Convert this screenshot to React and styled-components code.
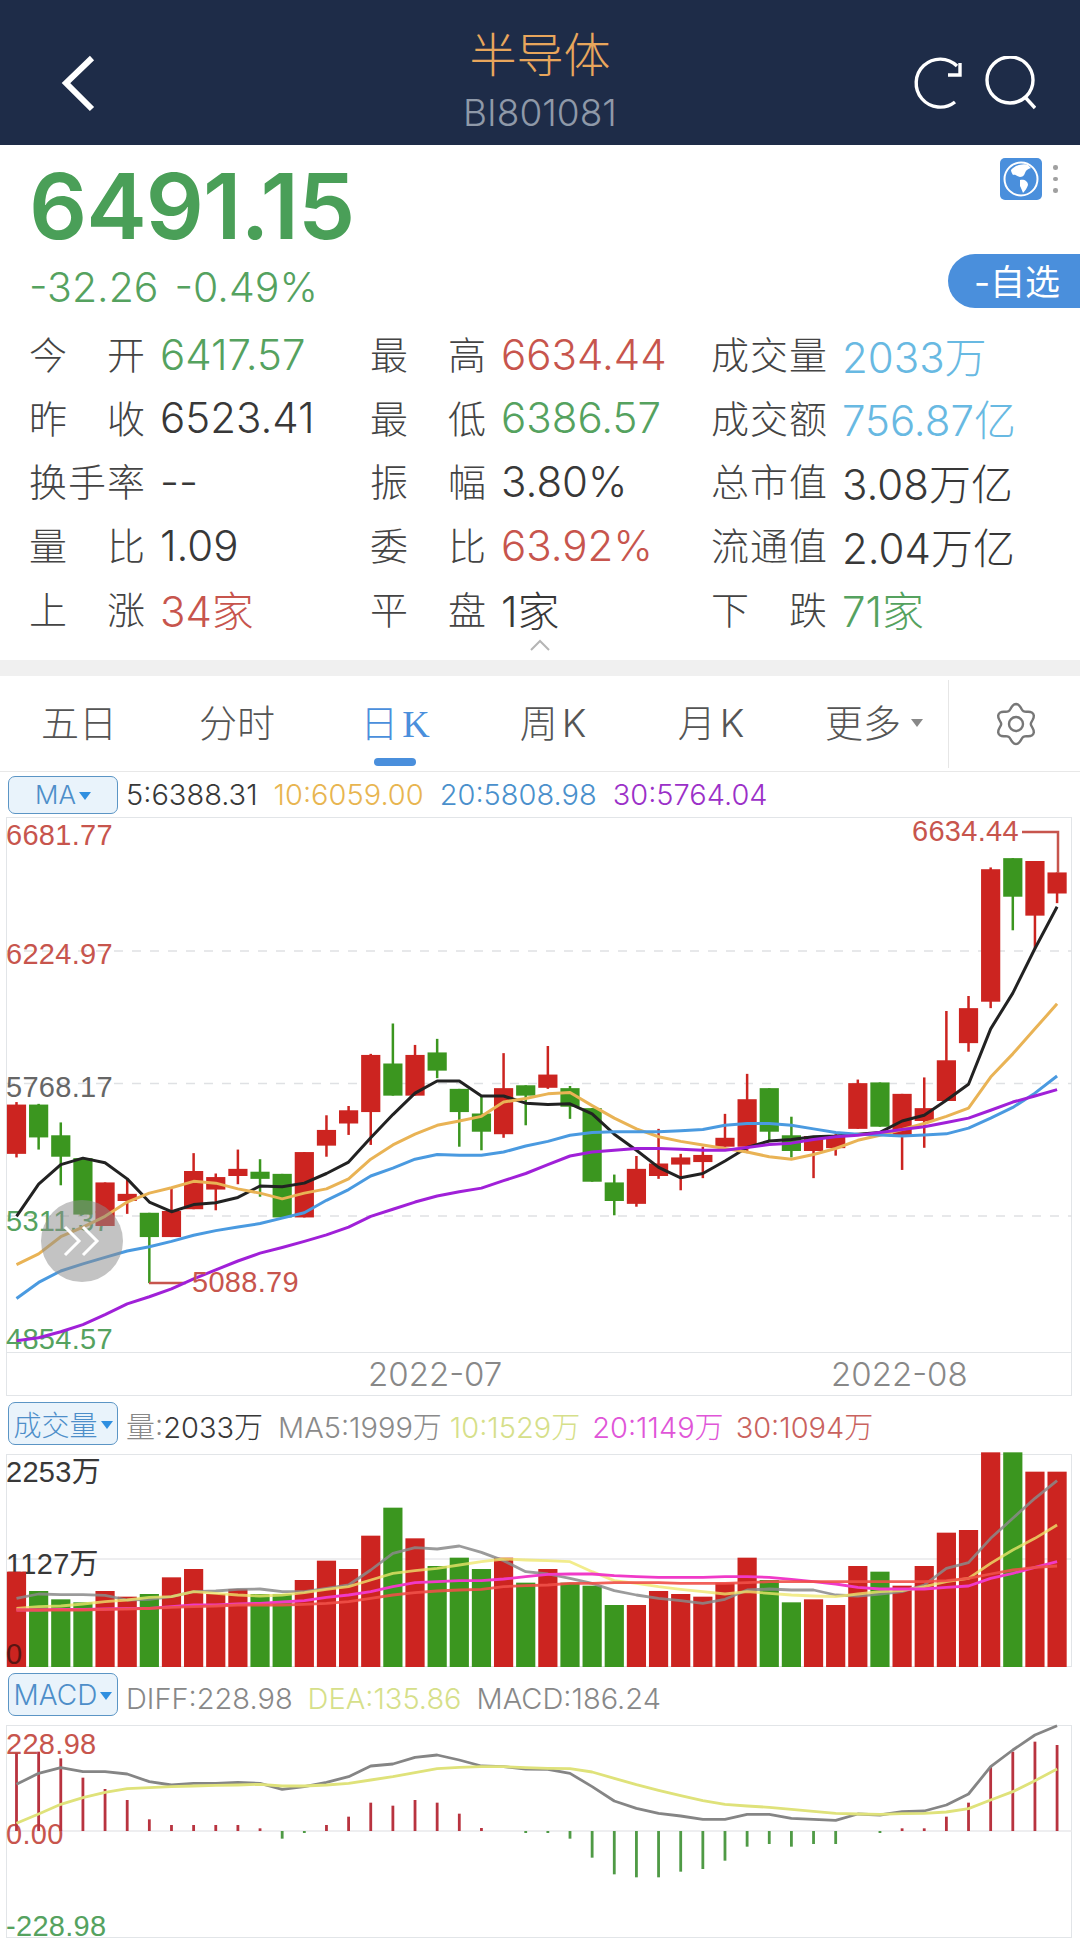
import React from "react";
import styled, { css, createGlobalStyle } from "styled-components";

const SANS = `Inter, "Noto Sans CJK SC", sans-serif`;
const colors = {
  navy: "#1e2c48",
  green: "#55a25f",
  red: "#c7554d",
  sky: "#68b9e2",
  ink: "#383838",
  blue: "#4a8fdc",
  frame: "#e2e5e8",
  candleRed: "#cc2420",
  candleGreen: "#3b961f",
};

// chart data is read off the reference: y values are in crop units, see the toY helpers
const slotX = (i) => 16.5 + 22.14 * i;
const priceY = (v) => 810 + v / 2.8;
const volumeY = (v) => 1390 + v / 3;
const macdY = (v) => 1670 + v / 3;

const candles = [
  ["r", 822, 960, 815, 970], ["g", 822, 914, 820, 948], ["g", 908, 968, 872, 1048], ["g", 972, 1130, 972, 1130],
  ["r", 1040, 1162, 1040, 1162], ["r", 1072, 1092, 1028, 1128], ["g", 1125, 1193, 1125, 1322], ["r", 1120, 1193, 1058, 1193],
  ["r", 1008, 1115, 958, 1115], ["r", 1025, 1060, 1015, 1118], ["r", 1002, 1022, 948, 1045], ["g", 1010, 1030, 975, 1080],
  ["g", 1016, 1138, 1016, 1138], ["r", 955, 1138, 955, 1138], ["r", 893, 937, 852, 968], ["r", 838, 875, 826, 907],
  ["r", 683, 843, 680, 935], ["g", 707, 797, 595, 797], ["r", 683, 797, 655, 797], ["g", 676, 727, 638, 748],
  ["g", 778, 843, 778, 940], ["g", 847, 898, 800, 950], ["r", 776, 905, 678, 915], ["g", 768, 797, 768, 880],
  ["r", 738, 775, 658, 778], ["g", 776, 828, 770, 862], ["g", 832, 1038, 832, 1038], ["g", 1040, 1092, 1018, 1132],
  ["r", 1002, 1100, 966, 1108], ["r", 987, 1022, 890, 1030], ["r", 970, 990, 960, 1062], ["r", 963, 983, 940, 1028],
  ["r", 915, 940, 848, 940], ["r", 807, 940, 736, 958], ["g", 776, 898, 776, 925], ["g", 908, 952, 856, 970],
  ["r", 910, 952, 910, 1028], ["r", 912, 944, 905, 965], ["r", 762, 890, 752, 890], ["g", 760, 884, 760, 884],
  ["r", 792, 912, 792, 1005], ["r", 832, 868, 746, 943], ["r", 698, 812, 560, 812], ["r", 552, 650, 518, 674],
  ["r", 163, 534, 158, 552], ["g", 132, 240, 132, 334], ["r", 140, 293, 140, 385], ["r", 172, 231, 172, 258],
];

const priceLines = [
  { color: "#222222", points: [1135, 1045, 990, 972, 985, 1030, 1095, 1122, 1102, 1097, 1082, 1050, 1052, 1042, 1015, 983, 915, 850, 790, 756, 756, 798, 798, 818, 822, 820, 848, 905, 950, 998, 1027, 1015, 980, 942, 924, 920, 912, 910, 905, 900, 868, 852, 810, 765, 610, 510, 385, 268] },
  { color: "#e9b355", points: [1270, 1240, 1192, 1165, 1135, 1095, 1070, 1055, 1037, 1042, 1058, 1070, 1086, 1070, 1058, 1030, 975, 935, 905, 880, 868, 855, 815, 805, 792, 788, 825, 860, 890, 912, 925, 935, 945, 955, 968, 975, 962, 945, 922, 908, 892, 875, 855, 832, 745, 680, 610, 540] },
  { color: "#4a9ae0", points: [1365, 1320, 1288, 1268, 1250, 1232, 1220, 1205, 1188, 1175, 1165, 1155, 1140, 1125, 1090, 1060, 1022, 1000, 975, 962, 964, 964, 955, 938, 925, 908, 900, 898, 898, 898, 895, 892, 880, 875, 875, 880, 890, 900, 905, 907, 910, 907, 904, 888, 860, 830, 790, 742] },
  { color: "#a020d8", points: [1483, 1475, 1458, 1438, 1410, 1380, 1360, 1338, 1310, 1285, 1260, 1238, 1222, 1205, 1187, 1165, 1135, 1115, 1095, 1078, 1066, 1056, 1035, 1015, 990, 966, 955, 950, 945, 945, 947, 950, 950, 942, 934, 930, 920, 912, 908, 900, 892, 884, 872, 860, 838, 815, 798, 780] },
];

const volumes = [
  ["r", 545], ["g", 603], ["g", 628], ["g", 637], ["r", 603], ["r", 620], ["g", 612], ["r", 562],
  ["r", 537], ["r", 612], ["r", 597], ["g", 612], ["g", 612], ["r", 570], ["r", 512], ["r", 537],
  ["r", 437], ["g", 353], ["r", 445], ["g", 528], ["g", 503], ["g", 537], ["r", 503], ["g", 578],
  ["r", 537], ["g", 578], ["g", 587], ["g", 645], ["r", 645], ["r", 603], ["r", 612], ["r", 620],
  ["r", 578], ["r", 503], ["g", 570], ["g", 637], ["r", 628], ["r", 645], ["r", 528], ["g", 545],
  ["r", 587], ["r", 528], ["r", 428], ["r", 420], ["r", 187], ["g", 187], ["r", 245], ["r", 245],
];

const volumeLines = [
  { color: "#8a8a8a", opacity: 0.85, points: [625, 612, 614, 614, 616, 630, 628, 620, 605, 603, 598, 597, 605, 605, 595, 585, 540, 490, 473, 477, 468, 487, 512, 545, 552, 565, 580, 602, 615, 625, 632, 640, 628, 600, 597, 600, 600, 615, 618, 612, 605, 585, 535, 518, 445, 385, 325, 272] },
  { color: "#eee76c", opacity: 0.78, points: [655, 650, 648, 642, 635, 630, 622, 620, 605, 610, 615, 618, 615, 608, 598, 590, 570, 550, 542, 535, 525, 515, 507, 510, 512, 515, 545, 572, 580, 590, 598, 605, 612, 605, 610, 615, 618, 620, 612, 605, 602, 590, 575, 565, 520, 480, 445, 405] },
  { color: "#f03ac8", opacity: 1, points: [660, 660, 658, 658, 657, 655, 655, 650, 645, 645, 642, 640, 636, 632, 622, 615, 605, 590, 578, 575, 572, 572, 567, 560, 553, 552, 552, 557, 560, 562, 562, 562, 560, 560, 562, 568, 575, 582, 592, 597, 597, 597, 592, 588, 565, 550, 532, 515] },
  { color: "#ef5048", opacity: 0.9, points: [660, 660, 660, 660, 658, 657, 655, 652, 650, 648, 645, 645, 645, 643, 640, 635, 625, 615, 608, 603, 600, 598, 590, 587, 585, 580, 580, 578, 578, 578, 580, 580, 580, 578, 575, 575, 575, 575, 575, 575, 575, 575, 572, 565, 552, 540, 532, 528] },
];

const macdBars = [250, 245, 265, 323, 357, 390, 448, 465, 465, 465, 465, 475, 506, 488, 465, 440, 398, 407, 390, 398, 431, 474, null, 488, 488, 506, 563, 613, 622, 622, 605, 597, 572, 530, 522, 530, 522, 522, null, 488, 475, 475, 440, 398, 290, 245, 215, 225];

const macdLines = [
  { color: "#858585", points: [343, 310, 293, 305, 305, 312, 335, 345, 340, 340, 337, 340, 358, 350, 337, 320, 288, 282, 262, 255, 270, 288, 290, 297, 298, 310, 350, 393, 415, 430, 438, 448, 448, 433, 433, 445, 448, 451, 432, 435, 425, 423, 405, 372, 290, 240, 195, 167] },
  { color: "#dfe27a", points: [460, 432, 403, 383, 367, 356, 353, 350, 348, 346, 345, 343, 348, 348, 345, 340, 330, 320, 308, 296, 292, 290, 290, 293, 295, 296, 306, 325, 344, 361, 377, 392, 403, 408, 412, 418, 424, 430, 432, 433, 431, 430, 426, 416, 390, 365, 332, 297] },
];

const stats = [
  [["今开", "6417.57", "green"], ["最高", "6634.44", "red"], ["成交量", "2033万", "sky"]],
  [["昨收", "6523.41", "ink"], ["最低", "6386.57", "green"], ["成交额", "756.87亿", "sky"]],
  [["换手率", "--", "ink"], ["振幅", "3.80%", "ink"], ["总市值", "3.08万亿", "ink"]],
  [["量比", "1.09", "ink"], ["委比", "63.92%", "red"], ["流通值", "2.04万亿", "ink"]],
  [["上涨", "34家", "red"], ["平盘", "1家", "ink"], ["下跌", "71家", "green"]],
];

const tabs = [
  { name: "五日" },
  { name: "分时" },
  { name: "日", k: true, active: true },
  { name: "周", k: true },
  { name: "月", k: true },
];

const linePoints = (points, toY) => points.map((v, i) => `${slotX(i)},${toY(v)}`).join(" ");

// six soft lobes around the centre
const gearPath = () => {
  const pts = [];
  for (let deg = 0; deg < 360; deg += 5) {
    const a = (deg * Math.PI) / 180;
    const r = 17.4 + 2.6 * Math.cos(6 * a);
    pts.push(`${(22 + r * Math.sin(a)).toFixed(1)} ${(22 - r * Math.cos(a)).toFixed(1)}`);
  }
  return `M${pts.join(" L")} Z`;
};

const App = () => {
  return (
    <Page>
      <GlobalStyle />
      <Header>
        <NavIcon viewBox="0 0 44 60" $w={44} $h={60}>
          <path d="M36 5 L10 30 L36 56" />
        </NavIcon>
        <TitleBlock>
          <Title>半导体</Title>
          <Code>BI801081</Code>
        </TitleBlock>
        <NavActions>
          <NavIcon viewBox="0 0 54 54" $w={54} $h={54}>
            <path d="M47 10 A24 24 0 1 0 45 46" />
            <path d="M50 7 V19 H38" />
          </NavIcon>
          <NavIcon viewBox="0 0 54 54" $w={54} $h={54}>
            <circle cx="28" cy="24" r="23" />
            <path d="M43 41 L53 52" />
          </NavIcon>
        </NavActions>
      </Header>

      <Quote>
        <QuoteTop>
          <div>
            <Price>6491.15</Price>
            <Change>
              <span>-32.26</span>
              <span>-0.49%</span>
            </Change>
          </div>
          <QuoteSide>
            <GlobeRow>
              <svg width="42" height="42" viewBox="0 0 42 42">
                <rect width="42" height="42" rx="5" fill={colors.blue} />
                <circle cx="21" cy="21" r="16.5" fill={colors.blue} stroke="#fff" strokeWidth="2" />
                <path d="M11 12 C15 7 24 5 28 7 L31 10 C28 11 26 12 25 15 C24 18 22 19 20 19 C17 18 15 16 13 17 C12 15 11 14 11 12 Z" fill="#fff" />
                <path d="M20 22 C24 21 28 23 28 27 C27 30 25 33 23 35 C22 32 21 30 20 28 Z" fill="#fff" />
              </svg>
              <Dots>
                <i />
                <i />
                <i />
              </Dots>
            </GlobeRow>
            <WatchButton>-自选</WatchButton>
          </QuoteSide>
        </QuoteTop>

        <StatGrid>
          {stats.flat().map(([label, value, tone]) => (
            <Stat key={label}>
              <StatLabel>{label}</StatLabel>
              <StatValue $tone={tone}>{value}</StatValue>
            </Stat>
          ))}
        </StatGrid>
        <Collapse>
          <svg width="22" height="12" viewBox="0 0 22 12">
            <path d="M2 11 L11 2 L20 11" fill="none" stroke="#b5b5b5" strokeWidth="2" />
          </svg>
        </Collapse>
      </Quote>

      <Band />

      <Tabs>
        {tabs.map((tab) => (
          <Tab key={tab.name} $active={tab.active}>
            <span>
              {tab.name}
              {tab.k && <TabK $active={tab.active}>K</TabK>}
            </span>
            {tab.active && <TabMarker />}
          </Tab>
        ))}
        <MoreTab>
          <span>更多</span>
          <MoreCaret />
        </MoreTab>
        <GearCell>
          <svg width="44" height="44" viewBox="0 0 44 44" fill="none" stroke="#777" strokeWidth="2.4">
            <path d={gearPath()} />
            <circle cx="22" cy="22" r="7" />
          </svg>
        </GearCell>
      </Tabs>

      <IndicatorRow $h={45} $gap={16}>
        <IndicatorButton $h={38}>
          <ButtonText>MA</ButtonText>
          <ButtonCaret />
        </IndicatorButton>
        <Reading $color="#383838">5:6388.31</Reading>
        <Reading $color="#e8b550">10:6059.00</Reading>
        <Reading $color="#4a90cc">20:5808.98</Reading>
        <Reading $color="#9b30c8">30:5764.04</Reading>
      </IndicatorRow>

      <ChartFrame $h={536}>
        <ChartSvg viewBox="6 816 1066 536">
          {[950, 1082.5, 1215].map((y) => (
            <line key={y} x1="6" x2="1072" y1={y} y2={y} stroke="#dfe1e4" strokeWidth="1.5" strokeDasharray="9 9" />
          ))}
          <AxisText x="6" y="844" fill={colors.red}>6681.77</AxisText>
          <AxisText x="6" y="963" fill={colors.red}>6224.97</AxisText>
          <AxisText x="6" y="1096" fill="#666">5768.17</AxisText>
          <AxisText x="6" y="1230" fill={colors.green}>5311.37</AxisText>
          <AxisText x="6" y="1348" fill={colors.green}>4854.57</AxisText>
          {candles.map(([c, top, bottom, wickTop, wickBottom], i) => {
            const fill = c === "r" ? colors.candleRed : colors.candleGreen;
            return (
              <g key={i} fill={fill}>
                <rect x={slotX(i) - 1.25} width="2.5" y={priceY(wickTop)} height={priceY(wickBottom) - priceY(wickTop)} />
                <rect x={slotX(i) - 9.6} width="19.2" y={priceY(top)} height={priceY(bottom) - priceY(top)} />
              </g>
            );
          })}
          <path d="M149 1282 H186" stroke={colors.red} strokeWidth="2.5" fill="none" />
          <path d="M1022 831 H1058 V872" stroke={colors.red} strokeWidth="2.5" fill="none" />
          {priceLines.map((line) => (
            <polyline key={line.color} points={linePoints(line.points, priceY)} fill="none" stroke={line.color} strokeWidth="3" strokeLinejoin="round" />
          ))}
          <AxisText x="192" y="1291" fill={colors.red}>5088.79</AxisText>
          <AxisText x="912" y="840" fill={colors.red}>6634.44</AxisText>
        </ChartSvg>
        <ScrollHandle>
          <svg width="40" height="32" viewBox="0 0 40 32" fill="none" stroke="#fff" strokeWidth="3">
            <path d="M3 2 L17 16 L3 30" />
            <path d="M21 2 L35 16 L21 30" />
          </svg>
        </ScrollHandle>
      </ChartFrame>
      <DateAxis>
        <span>2022-07</span>
        <span>2022-08</span>
      </DateAxis>

      <IndicatorRow $h={58} $tall>
        <IndicatorButton $h={43}>
          <ButtonText $large>成交量</ButtonText>
          <ButtonCaret />
        </IndicatorButton>
        <Reading $color="#888">
          量:<Dark>2033万</Dark>
        </Reading>
        <Reading $color="#8a8a8a">MA5:1999万</Reading>
        <Reading $color="#d6df8a" $pull={7}>10:1529万</Reading>
        <Reading $color="#e055d8" $pull={3}>20:1149万</Reading>
        <Reading $color="#c9625e" $pull={3}>30:1094万</Reading>
      </IndicatorRow>

      <ChartFrame $h={213}>
        <ChartSvg viewBox="6 1454 1066 213">
          <line x1="6" x2="1072" y1="1559" y2="1559" stroke="#e8e9eb" strokeWidth="1.5" />
          <AxisText x="6" y="1482" fill="#383838">2253万</AxisText>
          <AxisText x="6" y="1574" fill="#383838">1127万</AxisText>
          {volumes.map(([c, top], i) => (
            <rect
              key={i}
              x={slotX(i) - 9.6}
              width="19.2"
              y={volumeY(top)}
              height={1667 - volumeY(top)}
              fill={c === "r" ? colors.candleRed : colors.candleGreen}
            />
          ))}
          {volumeLines.map((line) => (
            <polyline key={line.color} points={linePoints(line.points, volumeY)} fill="none" stroke={line.color} strokeOpacity={line.opacity} strokeWidth="2.8" strokeLinejoin="round" />
          ))}
          <AxisText x="6" y="1664" fill="#5a1512">0</AxisText>
        </ChartSvg>
      </ChartFrame>

      <IndicatorRow $h={58} $tall>
        <IndicatorButton $h={43}>
          <ButtonText $large>MACD</ButtonText>
          <ButtonCaret />
        </IndicatorButton>
        <Reading $color="#888">DIFF:228.98</Reading>
        <Reading $color="#d6df8a">DEA:135.86</Reading>
        <Reading $color="#888">MACD:186.24</Reading>
      </IndicatorRow>

      <ChartFrame $h={213}>
        <ChartSvg viewBox="6 1725 1066 213">
          <line x1="6" x2="1072" y1="1831" y2="1831" stroke="#e8e9eb" strokeWidth="1.5" />
          <AxisText x="6" y="1754" fill={colors.red}>228.98</AxisText>
          <AxisText x="6" y="1844" fill={colors.red}>0.00</AxisText>
          <AxisText x="6" y="1936" fill={colors.green}>-228.98</AxisText>
          {macdBars.map((top, i) =>
            top === null ? null : (
              <rect
                key={i}
                x={slotX(i) - 1.4}
                width="2.8"
                y={Math.min(macdY(top), 1831)}
                height={Math.max(Math.abs(macdY(top) - 1831), 2)}
                fill={top > 482 ? "#4f9a45" : "#b8333f"}
              />
            )
          )}
          {macdLines.map((line) => (
            <polyline key={line.color} points={linePoints(line.points, macdY)} fill="none" stroke={line.color} strokeWidth="2.8" strokeLinejoin="round" />
          ))}
        </ChartSvg>
      </ChartFrame>
    </Page>
  );
};

export default App;

const GlobalStyle = createGlobalStyle`
  html,
  body {
    margin: 0;
    padding: 0;
    background: #fff;
  }
`;

const Page = styled.div`
  width: 1080px;
  height: 1948px;
  overflow: hidden;
  background: #fff;
  font-family: ${SANS};
`;

const Header = styled.header`
  height: 145px;
  background: ${colors.navy};
  display: grid;
  grid-template-columns: 1fr auto 1fr;
  align-items: center;
  padding: 20px 44px 0;
  box-sizing: border-box;
`;

const TitleBlock = styled.div`
  align-self: start;
  margin-top: -20px;
  display: flex;
  flex-direction: column;
  align-items: center;
`;

const Title = styled.div`
  color: #e8a65c;
  font-size: 47px;
  line-height: 60px;
  margin-top: 25px;
  font-weight: 300;
`;

const Code = styled.div`
  color: #8f99a8;
  font-size: 37px;
  line-height: 42px;
  margin-top: 7px;
  font-weight: 300;
`;

const NavActions = styled.div`
  display: flex;
  justify-content: flex-end;
  gap: 18px;
`;

const NavIcon = styled.svg`
  width: ${({ $w }) => $w}px;
  height: ${({ $h }) => $h}px;
  margin-left: ${({ $w }) => ($w === 44 ? 12 : 0)}px;
  fill: none;
  stroke: #fff;
  stroke-width: ${({ $w }) => ($w === 44 ? 6 : 3.4)};
`;

const Quote = styled.section`
  height: 515px;
  box-sizing: border-box;
  padding-top: 13px;
`;

const QuoteTop = styled.div`
  display: flex;
  justify-content: space-between;
  height: 163px;
  padding-left: 29px;
`;

const Price = styled.div`
  color: #4a9f58;
  font-size: 91px;
  line-height: 96px;
  font-weight: 600;
  letter-spacing: -1px;
`;

const Change = styled.div`
  display: flex;
  gap: 16px;
  color: ${colors.green};
  font-size: 41px;
  line-height: 50px;
  margin-top: 8px;
  font-weight: 300;
`;

const QuoteSide = styled.div`
  width: 132px;
  display: flex;
  flex-direction: column;
  align-items: flex-end;
`;

const GlobeRow = styled.div`
  display: flex;
  align-items: center;
  gap: 11px;
  width: 80px;
`;

const Dots = styled.div`
  display: flex;
  flex-direction: column;
  gap: 7px;

  i {
    width: 4.5px;
    height: 4.5px;
    border-radius: 50%;
    background: #a0a0a0;
  }
`;

const WatchButton = styled.div`
  width: 132px;
  height: 54px;
  margin-top: 54px;
  box-sizing: border-box;
  padding-left: 26px;
  border-radius: 27px 0 0 27px;
  background: ${colors.blue};
  color: #fff;
  font-size: 35px;
  line-height: 56px;
`;

const StatGrid = styled.div`
  display: grid;
  grid-template-columns: 341px 341px 1fr;
  grid-auto-rows: 63.6px;
  padding-left: 29px;
`;

const Stat = styled.div`
  display: flex;
  align-items: center;
  gap: 15px;
  white-space: nowrap;
`;

const StatLabel = styled.span`
  width: 116px;
  font-size: 38px;
  color: #444;
  font-weight: 300;
  text-align: justify;
  text-align-last: justify;
`;

const toneColors = {
  green: colors.green,
  red: colors.red,
  sky: colors.sky,
  ink: colors.ink,
};

const StatValue = styled.span`
  margin-top: 3px;
  font-size: 42px;
  font-weight: 300;
  color: ${({ $tone }) => toneColors[$tone]};
`;

const Collapse = styled.div`
  display: flex;
  justify-content: center;
  line-height: 0;
`;

const Band = styled.div`
  height: 16px;
  background: #f0f0f0;
`;

const Tabs = styled.nav`
  height: 95px;
  display: flex;
  border-bottom: 1px solid #e8e8e8;
`;

const Tab = styled.div`
  position: relative;
  width: 158px;
  display: flex;
  align-items: center;
  justify-content: center;
  padding-bottom: 6px;
  box-sizing: border-box;
  font-size: 38px;
  font-weight: 300;
  color: ${({ $active }) => ($active ? colors.blue : "#555")};
`;

const MoreTab = styled(Tab)`
  padding-left: 10px;
`;

const TabK = styled.span`
  margin-left: 4px;
  font-family: ${({ $active }) => ($active ? `"Liberation Serif", serif` : SANS)};
`;

const TabMarker = styled.span`
  position: absolute;
  left: 58px;
  bottom: 5px;
  width: 42px;
  height: 8px;
  border-radius: 4px;
  background: ${colors.blue};
`;

const MoreCaret = styled.span`
  margin-left: 10px;
  margin-top: 4px;
  border-left: 6px solid transparent;
  border-right: 6px solid transparent;
  border-top: 8px solid #888;
`;

const GearCell = styled.div`
  flex: 1;
  margin: 4px 0 3px;
  padding-left: 3px;
  border-left: 1px solid #e6e6e6;
  display: flex;
  align-items: center;
  justify-content: center;
`;

const Reading = styled.span`
  margin-left: ${({ $pull = 0 }) => -$pull}px;
  color: ${({ $color }) => $color};
  font-size: 29px;
  line-height: 42px;
  white-space: nowrap;
  font-weight: 300;
`;

const IndicatorButton = styled.div`
  width: 110px;
  height: ${({ $h }) => $h}px;
  box-sizing: border-box;
  display: flex;
  align-items: center;
  justify-content: center;
  gap: 3px;
  background: #e9f3fb;
  border: 1.5px solid #5b95c5;
  border-radius: 7px;
`;

const IndicatorRow = styled.div`
  height: ${({ $h }) => $h}px;
  box-sizing: border-box;
  padding-left: 8px;
  display: flex;
  align-items: center;
  gap: ${({ $gap = 15 }) => $gap}px;

  ${IndicatorButton} {
    margin-right: ${({ $gap = 15 }) => 8 - $gap}px;
  }

  ${({ $tall }) =>
    $tall &&
    css`
      ${Reading} {
        margin-top: 6px;
      }
      ${IndicatorButton} {
        margin-bottom: 3px;
      }
    `}
`;

const ButtonText = styled.span`
  color: #4d8ec9;
  font-size: ${({ $large }) => ($large ? 28 : 26)}px;
  font-weight: 300;
  white-space: nowrap;
`;

const ButtonCaret = styled.span`
  flex: none;
  margin-top: 2px;
  border-left: 6px solid transparent;
  border-right: 6px solid transparent;
  border-top: 8px solid #2f8fe0;
`;

const Dark = styled.span`
  color: #383838;
`;

const ChartFrame = styled.div`
  position: relative;
  width: 1066px;
  height: ${({ $h }) => $h}px;
  margin-left: 6px;
  box-shadow: inset 0 0 0 1px ${colors.frame};
`;

const ChartSvg = styled.svg`
  display: block;
  width: 100%;
  height: 100%;
  overflow: visible;
`;

const AxisText = styled.text`
  font-family: "Liberation Sans", "Noto Sans CJK SC", sans-serif;
  font-size: 29px;
  letter-spacing: 0.3px;
`;

const ScrollHandle = styled.div`
  position: absolute;
  left: 35px;
  top: 383px;
  width: 82px;
  height: 82px;
  border-radius: 50%;
  background: rgba(140, 140, 140, 0.52);
  display: flex;
  align-items: center;
  justify-content: center;
`;

const DateAxis = styled.div`
  width: 1066px;
  height: 43px;
  margin-left: 6px;
  box-sizing: border-box;
  padding-left: 361px;
  display: grid;
  grid-template-columns: 463px auto;
  border: 1px solid ${colors.frame};
  border-top: 0;
  color: #888;
  font-size: 33px;
  font-weight: 300;
  line-height: 42px;
`;
